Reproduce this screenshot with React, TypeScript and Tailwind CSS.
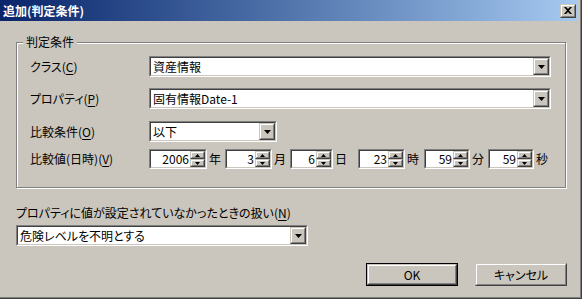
import React from 'react';

const FONT = "font-['Noto_Sans_CJK_JP','Liberation_Sans',sans-serif] [font-feature-settings:'palt']";

// classic 3D sunken field (combo / spin box frame)
const Sunken: React.FC<{ className?: string; children?: React.ReactNode }> = ({ className = '', children }) => (
    <div className={`border border-t-[#808080] border-l-[#808080] border-b-white border-r-white ${className}`}>
        <div className="h-full flex border border-t-[#404040] border-l-[#404040] border-b-[#cac6bd] border-r-[#cac6bd] bg-white">
            {children}
        </div>
    </div>
);

// classic raised bevel used for the small buttons
const Raised: React.FC<{ className?: string; children?: React.ReactNode }> = ({ className = '', children }) => (
    <div className={`border border-t-[#cac6bd] border-l-[#cac6bd] border-b-[#404040] border-r-[#404040] ${className}`}>
        <div className="h-full flex items-center justify-center border border-t-white border-l-white border-b-[#808080] border-r-[#808080] bg-[#cac6bd]">
            {children}
        </div>
    </div>
);

const ArrowDown = () => (
    <svg width="7" height="4" viewBox="0 0 7 4">
        <path d="M0 0h7L3.5 4z" fill="#000" />
    </svg>
);

const Combo: React.FC<{ value: string; width: string }> = ({ value, width }) => (
    <Sunken className={`${width} h-[21px]`}>
        <div className="flex-1 flex items-center pl-[2px] text-black whitespace-nowrap overflow-hidden">{value}</div>
        <Raised className="w-[16px] h-full">
            <ArrowDown />
        </Raised>
    </Sunken>
);

const SpinBox: React.FC<{ value: string; width: string }> = ({ value, width }) => (
    <Sunken className={`${width} h-[20px]`}>
        <div className="flex-1 flex items-center justify-end pr-[1px] text-black">{value}</div>
        <div className="w-[15px] flex flex-col">
            <Raised className="flex-1">
                <svg width="5" height="3" viewBox="0 0 5 3"><path d="M2.5 0L5 3H0z" fill="#000" /></svg>
            </Raised>
            <Raised className="flex-1">
                <svg width="5" height="3" viewBox="0 0 5 3"><path d="M0 0h5L2.5 3z" fill="#000" /></svg>
            </Raised>
        </div>
    </Sunken>
);

const Label: React.FC<{ text: string; mnemonic: string }> = ({ text, mnemonic }) => (
    <span className="whitespace-nowrap">
        {text}(<span className="underline underline-offset-2">{mnemonic}</span>)
    </span>
);

const dateParts = [
    { value: '2006', unit: '年', w: 'w-[58px]', ml: 'ml-0' },
    { value: '3', unit: '月', w: 'w-[47px]', ml: 'ml-[4px]' },
    { value: '6', unit: '日', w: 'w-[43px]', ml: 'ml-[4px]' },
    { value: '23', unit: '時', w: 'w-[47px]', ml: 'ml-[11px]' },
    { value: '59', unit: '分', w: 'w-[46px]', ml: 'ml-[5px]' },
    { value: '59', unit: '秒', w: 'w-[46px]', ml: 'ml-[4px]' },
];

export default function App() {
    return (
        <div className={`w-[582px] h-[299px] bg-[#cac6bd] text-[12px] leading-[14px] text-black ${FONT} border-r border-b border-r-[#404040] border-b-[#404040]`}>
            <div className="h-full flex flex-col border-r border-b border-r-[#808080] border-b-[#808080] pr-[2px]">
                {/* title bar */}
                <div className="h-[21px] flex items-center justify-between bg-linear-to-r from-[#0a246a] to-[#a6caf0] pl-[3px] pr-[2px]">
                    <span className="text-white font-bold text-[12px]">追加(判定条件)</span>
                    <Raised className="w-[16px] h-[14px]">
                        <svg width="8" height="7" viewBox="0 0 8 7">
                            <path d="M0 0h2l2 2 2-2h2L5 3.5 8 7H6L4 5 2 7H0l3-3.5z" fill="#000" />
                        </svg>
                    </Raised>
                </div>

                {/* group box */}
                <div className="relative ml-[16px] mt-[21px] w-[550px] h-[146px] border border-[#808080] shadow-[inset_1px_1px_0_#fff,1px_1px_0_#fff] pl-[13px]">
                    <span className="absolute left-[6px] top-[-8px] bg-[#cac6bd] px-[3px]">判定条件</span>

                    <div className="flex items-center mt-[13px]">
                        <div className="w-[119px]"><Label text="クラス" mnemonic="C" /></div>
                        <Combo value="資産情報" width="w-[402px]" />
                    </div>
                    <div className="flex items-center mt-[11px]">
                        <div className="w-[119px]"><Label text="プロパティ" mnemonic="P" /></div>
                        <Combo value="固有情報Date-1" width="w-[402px]" />
                    </div>
                    <div className="flex items-center mt-[12px]">
                        <div className="w-[119px]"><Label text="比較条件" mnemonic="O" /></div>
                        <Combo value="以下" width="w-[128px]" />
                    </div>
                    <div className="flex items-center mt-[7px]">
                        <div className="w-[119px]"><Label text="比較値(日時)" mnemonic="V" /></div>
                        {dateParts.map((p, i) => (
                            <div key={i} className={`flex items-center ${p.ml}`}>
                                <SpinBox value={p.value} width={p.w} />
                                <span className="ml-[2px] w-[12px]">{p.unit}</span>
                            </div>
                        ))}
                    </div>
                </div>

                {/* missing-value handling */}
                <div className="ml-[16px] mt-[17px] h-[16px] flex items-center">
                    <Label text="プロパティに値が設定されていなかったときの扱い" mnemonic="N" />
                </div>
                <div className="ml-[16px] mt-[4px]">
                    <Combo value="危険レベルを不明とする" width="w-[292px]" />
                </div>

                <div className="flex justify-end gap-[17px] mt-[17px] pr-[11px]">
                    <div className="w-[92px] h-[23px] border border-black">
                        <Raised className="h-full">OK</Raised>
                    </div>
                    <Raised className="w-[92px] h-[23px]">キャンセル</Raised>
                </div>
            </div>
        </div>
    );
}
